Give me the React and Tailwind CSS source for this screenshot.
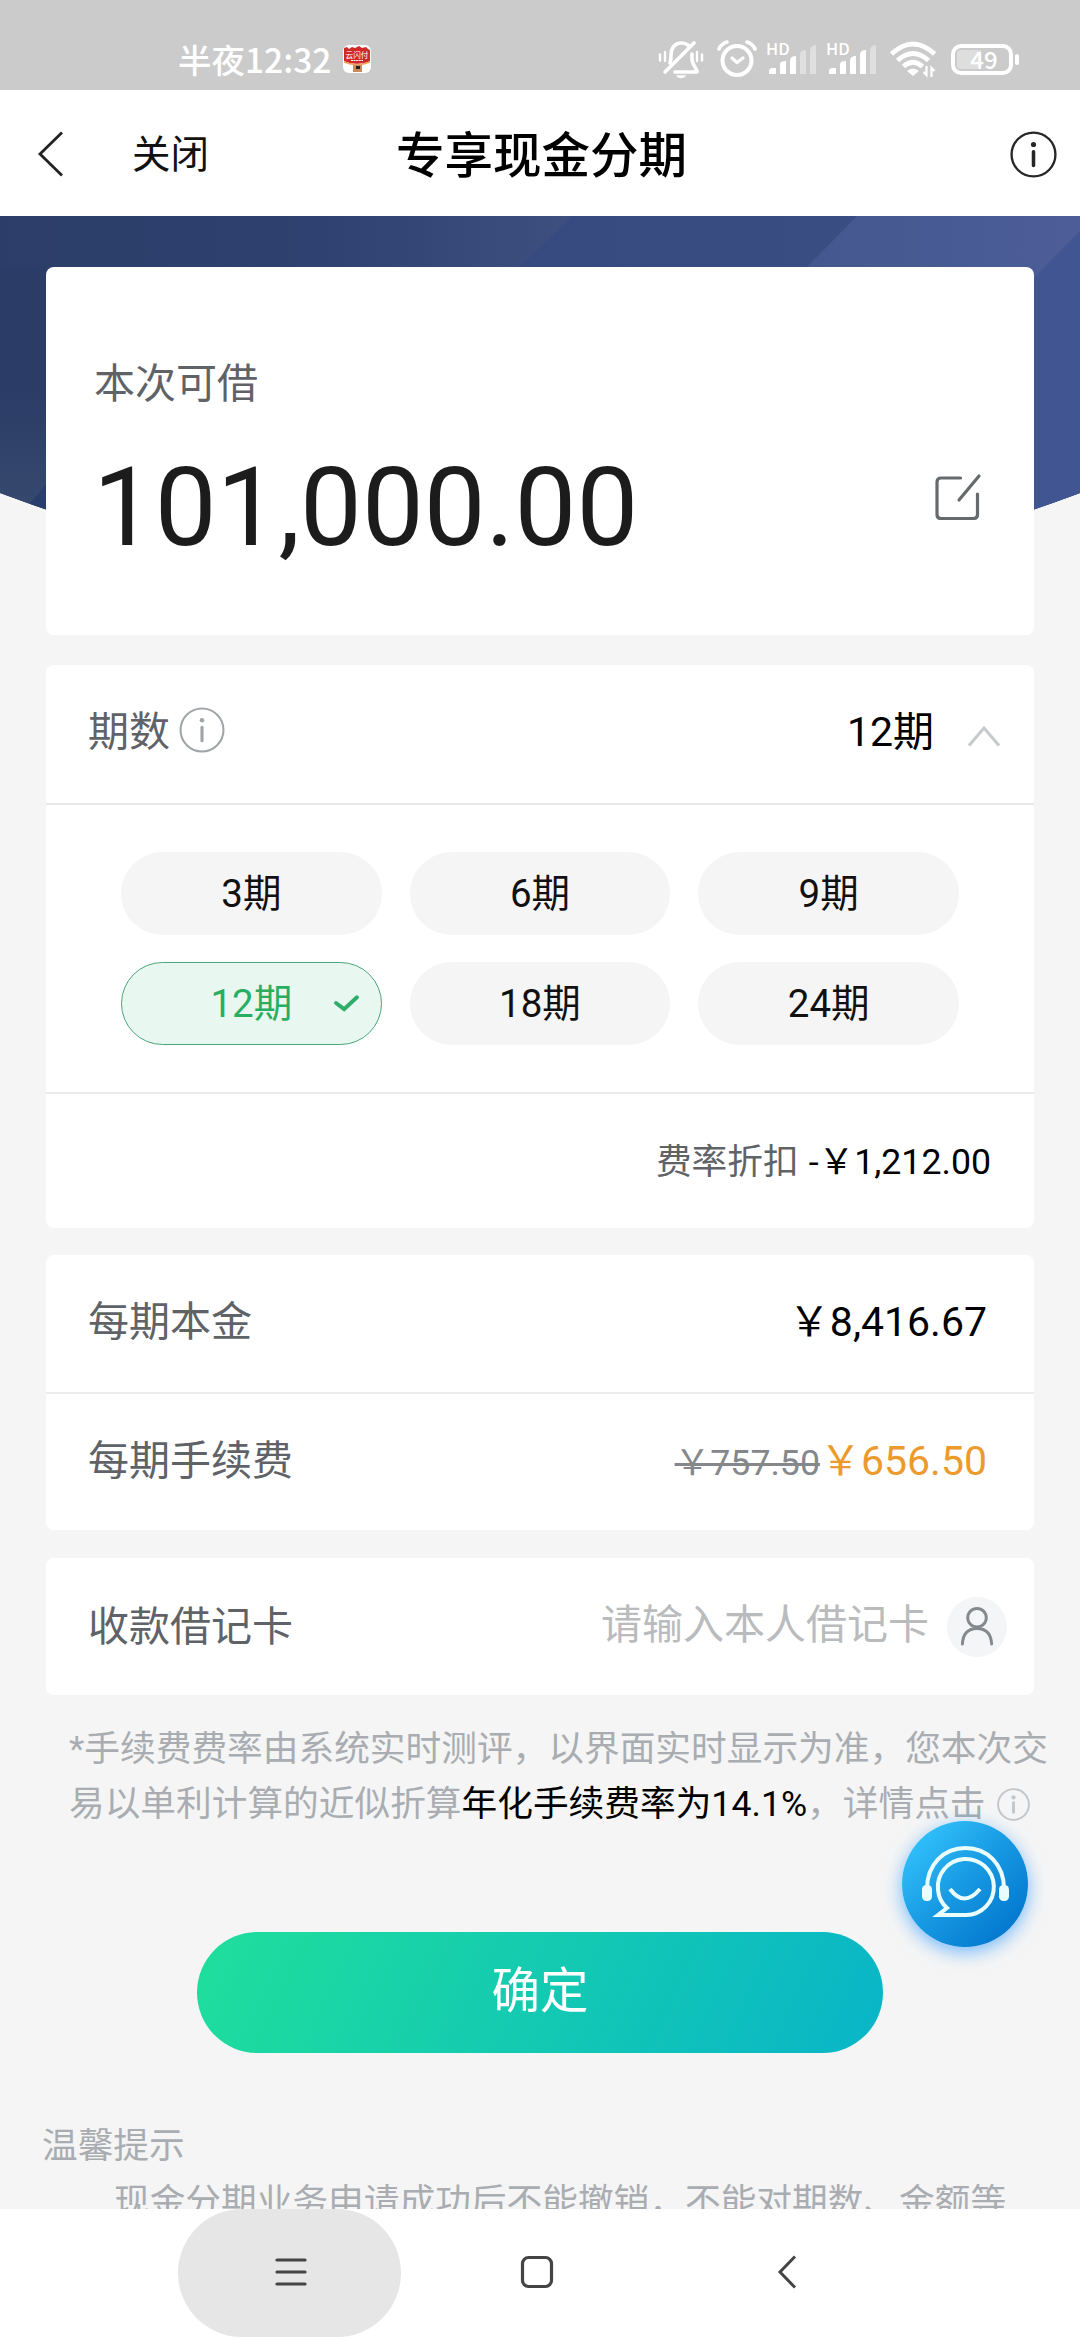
const TERMS = ['3期', '6期', '9期', '12期', '18期', '24期'];
const SELECTED = '12期';

function InfoIcon({ className, strokeWidth = 1.2 }) {
  return (
    <svg viewBox="0 0 24 24" className={className} fill="none" stroke="currentColor" strokeWidth={strokeWidth} strokeLinecap="round">
      <circle cx="12" cy="12" r="11.2" />
      <path d="M12 10.6v7" strokeWidth={strokeWidth * 1.5} />
      <circle cx="12" cy="6.9" r={strokeWidth * 1.1} fill="currentColor" stroke="none" />
    </svg>
  );
}

function SignalBars({ active }) {
  const bars = ['M0 33v-4l2-2h5v6z', 'M11 33V23q0-3 6-3v13z', 'M21 33V20q0-5 6-5v18z', 'M31 33V14q0-5 6-5v24z', 'M41 33V10q0-6 6-6v29z'];
  return (
    <svg viewBox="-4 -4 56 44" className="h-[44px] w-[56px]" fill="white">
      {bars.map((d, i) => (
        <path key={d} d={d} opacity={i < active ? 1 : 0.38} />
      ))}
      <text x="-3" y="14" fontSize="16.5" fontWeight="500" fontFamily="Noto Sans CJK SC, sans-serif">HD</text>
    </svg>
  );
}

function StatusBar() {
  return (
    <div className="flex h-[90px] shrink-0 items-center bg-[#cbcbcb] pt-[28px] text-white">
      <span className="ml-[178px] w-[165px] shrink-0 whitespace-nowrap font-['Noto_Sans_CJK_SC',sans-serif] text-[33.500px] font-medium leading-[40px]">半夜12:32</span>
      <svg viewBox="0 0 28 28" className="h-[28px] w-[28px]">
        <rect width="28" height="28" rx="6" fill="#fff" />
        <path d="M1 3l3-1 2 2 3-2 3 1 4-2 3 2 4-1 2 2 2 1v11q-3 2-5 2l-8 1-8-1-5-2z" fill="#cf2929" />
        <path d="M1 17q13 5 26 0" fill="none" stroke="#efa060" strokeWidth="1.4" />
        <path d="M10 20h9v7h-9z" fill="#c98a5a" />
        <path d="M13 21h4v3h-4z" fill="#222" />
        <text x="2.6" y="12.5" fontSize="7.6" fill="#fff" fontFamily="Noto Sans CJK SC, sans-serif">云闪付</text>
        <path d="M8 15.5h12" stroke="#fff" strokeWidth="1" strokeDasharray="2 .6" />
      </svg>
      <div className="ml-[287px] flex items-center">
        <svg viewBox="0 0 46 40" className="h-[40px] w-[46px]" fill="none" stroke="white" strokeWidth="3.6" strokeLinecap="round" strokeLinejoin="round">
          <path d="M12 24c1-3 1-6 1-8 0-7 4-12 10-12 3 0 6 1 8 3M34 15v5c0 4 2 6 5 12v1H17" />
          <path d="M7 33L36 4" />
          <path d="M19 37q4 3 8 0z" fill="white" strokeWidth="1.5" />
          <path d="M2 15.500v6M7 13v9M39 13v9M44 15.500v6" strokeWidth="2.4" />
        </svg>
        <svg viewBox="0 0 40 40" className="ml-[13px] h-[40px] w-[40px]" fill="none" stroke="white" strokeWidth="4" strokeLinecap="round" strokeLinejoin="round">
          <circle cx="20" cy="21.500" r="14.500" />
          <path d="M15 19l5 4.500 6-4.500" strokeWidth="3.2" />
          <path d="M2 10q2-5 8-7M30 3q6 2 8 7" strokeWidth="3.600" />
        </svg>
        <div className="ml-[8px]"><SignalBars active={3} /></div>
        <div className="ml-[4px]"><SignalBars active={4} /></div>
        <svg viewBox="0 0 46 38" className="ml-[9px] h-[38px] w-[46px]" fill="none" stroke="white" strokeWidth="4.800">
          <path d="M1.500 14q21.500-20 43 0M7.500 20.500q15.500-14 31 0M13.500 26.500q9.500-8.500 19 0" />
          <path d="M17 31q6-5 12 0l-6 5z" fill="white" stroke="none" />
          <path d="M36.500 26v9l-3-3M41.500 37v-9l3 3" strokeWidth="2.2" />
        </svg>
        <div className="ml-[15px] flex h-[31px] w-[62px] rounded-[10px] border-[4px] border-white p-[2px]">
          <div className="flex w-full items-center justify-center rounded-[4px] bg-[linear-gradient(90deg,#dedede_48%,transparent_48%)] pl-[4px] font-['Noto_Sans_CJK_SC',sans-serif] text-[24px] font-medium leading-[20px]">49</div>
        </div>
        <div className="ml-[2px] h-[11px] w-[4px] rounded-full bg-white" />
      </div>
    </div>
  );
}

function Header() {
  return (
    <header className="grid h-[126px] shrink-0 grid-cols-[396px_1fr_396px] items-center bg-white pt-[3px]">
      <div className="flex items-center pl-[37px]">
        <svg viewBox="0 0 28 46" className="mb-[2px] h-[46px] w-[28px]" fill="none" stroke="#222" strokeWidth="2.800">
          <path d="M25 1.500L3 23l22 21.500" />
        </svg>
        <span className="ml-[67px] text-[38.500px] leading-[50px] text-[#111]">关闭</span>
      </div>
      <h1 className="mt-[5px] whitespace-nowrap text-center text-[48.500px] font-medium leading-[60px] text-black">专享现金分期</h1>
      <div className="flex justify-end pr-[25px]">
        <InfoIcon className="mr-[1px] h-[47px] w-[47px] text-[#262626]" />
      </div>
    </header>
  );
}

function HeroBackdrop() {
  return (
    <svg viewBox="0 0 1080 330" className="absolute left-0 top-0 h-[330px] w-[1080px]">
      <defs>
        <linearGradient id="base" x1="0" x2="1" y1="0" y2="0">
          <stop offset="0" stopColor="#2b3d68" />
          <stop offset="0.300" stopColor="#2f4170" />
          <stop offset="0.520" stopColor="#3d4f7e" />
        </linearGradient>
        <linearGradient id="mid" x1="0" x2="1" y1="0" y2="0">
          <stop offset="0" stopColor="#33477b" />
          <stop offset="1" stopColor="#3c5086" />
        </linearGradient>
        <linearGradient id="light" x1="0" x2="1" y1="0" y2="0">
          <stop offset="0" stopColor="#42568a" />
          <stop offset="1" stopColor="#4c5d98" />
        </linearGradient>
        <linearGradient id="edge" x1="0" x2="0" y1="0" y2="1">
          <stop offset="0.450" stopColor="#2b3d66" />
          <stop offset="1" stopColor="#394c70" />
        </linearGradient>
        <clipPath id="curve"><path d="M0 0H1080V277Q810 378 540 378T0 277z" /></clipPath>
      </defs>
      <g clipPath="url(#curve)">
        <path d="M0 0h1080v330H0z" fill="url(#base)" />
        <path d="M0 50h46v280H0z" fill="url(#edge)" />
        <path d="M46 268l-18 22 18 20z" fill="#2a3e6e" />
        <path d="M571 0H1080v330H240z" fill="url(#mid)" />
        <path d="M857 0H1080v100L700 160z" fill="url(#light)" />
        <path d="M1080 15v315H900L1034 62z" fill="#415592" />
      </g>
    </svg>
  );
}

function AmountCard() {
  return (
    <section className="relative mx-[46px] mt-[51px] h-[368px] rounded-[8px] bg-white pl-[48px] pr-[53px] pt-[87px]">
      <div className="text-[41px] leading-[60px] text-[#5f6368]">本次可借</div>
      <div className="mt-[29px] flex items-center justify-between">
        <div className="-ml-[1px] text-[110px] leading-[130px] text-[#1c1c1c]">101,000.00</div>
        <svg viewBox="0 0 48 48" className="-mr-[1px] mb-[24px] h-[48px] w-[48px]" fill="none" stroke="#666a6d" strokeWidth="3.200" strokeLinecap="round">
          <path d="M26.500 6H7q-4 0-4 4V42.500q0 4 4 4H39.500q4 0 4-4V22" />
          <path d="M25 28L45 4" />
        </svg>
      </div>
    </section>
  );
}

function TermCard() {
  return (
    <section className="mx-[46px] mt-[30px] h-[563px] rounded-[8px] bg-white">
      <div className="flex h-[140px] items-center border-b-2 border-[#e6e8ea] pb-[4px] pl-[42px] pr-[33px]">
        <span className="text-[41px] leading-[60px] text-[#5f6368]">期数</span>
        <InfoIcon className="mb-[4px] ml-[9px] h-[46px] w-[46px] text-[#a2a5a8]" strokeWidth={1.1} />
        <span className="ml-auto text-[41px] leading-[60px] text-black">12期</span>
        <svg viewBox="0 0 34 24" className="ml-[33px] mt-[8px] h-[24px] w-[34px]" fill="none" stroke="#c6cacd" strokeWidth="3">
          <path d="M2 21.500L17 4l15 17.500" />
        </svg>
      </div>
      <div className="grid h-[289px] grid-cols-3 content-center gap-x-[28px] gap-y-[27px] border-b-2 border-[#e9ebec] px-[75px]">
        {TERMS.map((term) =>
          term === SELECTED ? (
            <div key={term} className="relative flex h-[83px] items-center justify-center rounded-full border-[1.500px] border-[#4ba57c] bg-[#e8f7ef] pt-px text-[38.500px] text-[#27ae60]">
              {term}
              <svg viewBox="0 0 28 20" className="absolute right-[21px] top-[31px] h-[19px] w-[27px]" fill="none" stroke="#2fae6b" strokeWidth="4.200" strokeLinecap="round">
                <path d="M3 9.500l8.500 6.500L25 3.500" />
              </svg>
            </div>
          ) : (
            <div key={term} className="flex h-[83px] items-center justify-center rounded-full bg-[#f5f5f5] pt-px text-[38.500px] text-[#111]">{term}</div>
          ),
        )}
      </div>
      <div className="flex h-[134px] items-center justify-end pr-[43px] pt-[3px] text-[35.700px]">
        <span className="text-[#5f6368]">费率折扣</span>
        <span className="ml-[10px] text-black">-￥1,212.00</span>
      </div>
    </section>
  );
}

function FeeCard() {
  return (
    <section className="mx-[46px] mt-[27px] h-[275px] rounded-[8px] bg-white text-[41px]">
      <div className="flex h-[139px] items-center justify-between border-b-2 border-[#ececee] pb-[1px] pl-[42px] pr-[47px]">
        <span className="text-[#5f6368]">每期本金</span>
        <span className="text-black">￥8,416.67</span>
      </div>
      <div className="flex h-[136px] items-center justify-between pl-[42px] pr-[47px]">
        <span className="text-[#5f6368]">每期手续费</span>
        <span className="flex items-baseline">
          <s className="text-[35.700px] text-[#85888b] decoration-[3px]">￥757.50</s>
          <span className="text-[#ec9a2c]">￥656.50</span>
        </span>
      </div>
    </section>
  );
}

function DebitCard() {
  return (
    <section className="mx-[46px] mt-[28px] flex h-[137px] items-center rounded-[8px] bg-white pl-[42px] pr-[27px] text-[41px]">
      <span className="mt-[2px] text-[#5f6368]">收款借记卡</span>
      <span className="mb-[2px] ml-auto text-[#b9bbbd]">请输入本人借记卡</span>
      <span className="ml-[18px] flex h-[60px] w-[60px] items-center justify-center rounded-full bg-[#f4f5f6]">
        <svg viewBox="0 0 34 42" className="h-[41px] w-[34px]" fill="none" stroke="#85898d" strokeWidth="3" strokeLinecap="round">
          <circle cx="17" cy="12" r="9.500" />
          <path d="M2 39q1-16 15-16t15 16" />
        </svg>
      </span>
    </section>
  );
}

function SupportButton() {
  return (
    <div className="absolute left-[902px] top-[1821px] h-[126px] w-[126px] rounded-full bg-[linear-gradient(135deg,#35c8ff_5%,#1798e2_50%,#0074cc_92%)] shadow-[0_5px_18px_rgba(30,145,255,0.600)]">
      <svg viewBox="0 0 126 126" className="h-full w-full" fill="none" stroke="#e9fdff" strokeWidth="4">
        <path d="M25 68C25 43 42 27 63.500 27S102 43 102 68" />
        <path d="M36 94H64A28 28 0 1 0 36 69Q37 80 45 87z" />
        <path d="M48 68Q62 87 78 68" />
        <rect x="20" y="64" width="10" height="16" rx="4.500" fill="#e9fdff" stroke="none" />
        <rect x="97" y="64" width="10" height="16" rx="4.500" fill="#e9fdff" stroke="none" />
      </svg>
    </div>
  );
}

function NavBar() {
  return (
    <nav className="relative flex h-[131px] shrink-0 items-start bg-white">
      <div className="ml-[178px] flex h-[128px] w-[223px] items-center justify-center rounded-full bg-[#e6e6e6]">
        <svg viewBox="0 0 32 30" className="mb-[3px] ml-[3px] h-[30px] w-[32px]" stroke="#444" strokeWidth="3.200" strokeLinecap="round">
          <path d="M2 3h28M2 15h28M2 27h28" />
        </svg>
      </div>
      <svg viewBox="0 0 34 34" className="ml-[119px] mt-[46px] h-[34px] w-[34px]" fill="none" stroke="#444" strokeWidth="3.200">
        <rect x="2.500" y="2.500" width="29" height="29" rx="6" />
      </svg>
      <svg viewBox="0 0 20 34" className="ml-[223px] mt-[46px] h-[34px] w-[20px]" fill="none" stroke="#444" strokeWidth="3">
        <path d="M18 1.500L3 17l15 15.500" />
      </svg>
    </nav>
  );
}

export default function App() {
  return (
    <div className="relative flex h-[2340px] w-[1080px] flex-col overflow-hidden bg-[#f5f5f5] font-[Roboto,'Noto_Sans_CJK_SC',sans-serif]">
      <StatusBar />
      <Header />
      <main className="relative min-h-0 flex-1 overflow-hidden">
        <HeroBackdrop />
        <div className="flex flex-col">
          <AmountCard />
          <TermCard />
          <FeeCard />
          <DebitCard />
          <p className="ml-[69px] mt-[27px] whitespace-nowrap text-[35.700px] leading-[55px] text-[#a9adb1]">
            *手续费费率由系统实时测评，以界面实时显示为准，您本次交
            <br />
            易以单利计算的近似折算<span className="text-black">年化手续费率为14.1%</span>，详情点击
            <InfoIcon className="ml-[11px] inline-block h-[33px] w-[33px] align-[-5px] text-[#c3c6c9]" strokeWidth={1.4} />
          </p>
          <button className="mx-auto mt-[100px] flex h-[121px] w-[686px] items-center justify-center rounded-full bg-[linear-gradient(115deg,#1fdf9b,#08b5c8)] text-[48.500px] text-white">确定</button>
          <div className="mt-[65px] whitespace-nowrap text-[35.700px] leading-[56px] text-[#a9adb1]">
            <div className="pl-[42px]">温馨提示</div>
            <div className="pl-[114px]">现金分期业务申请成功后不能撤销，不能对期数、金额等</div>
          </div>
        </div>
      </main>
      <NavBar />
      <SupportButton />
    </div>
  );
}
